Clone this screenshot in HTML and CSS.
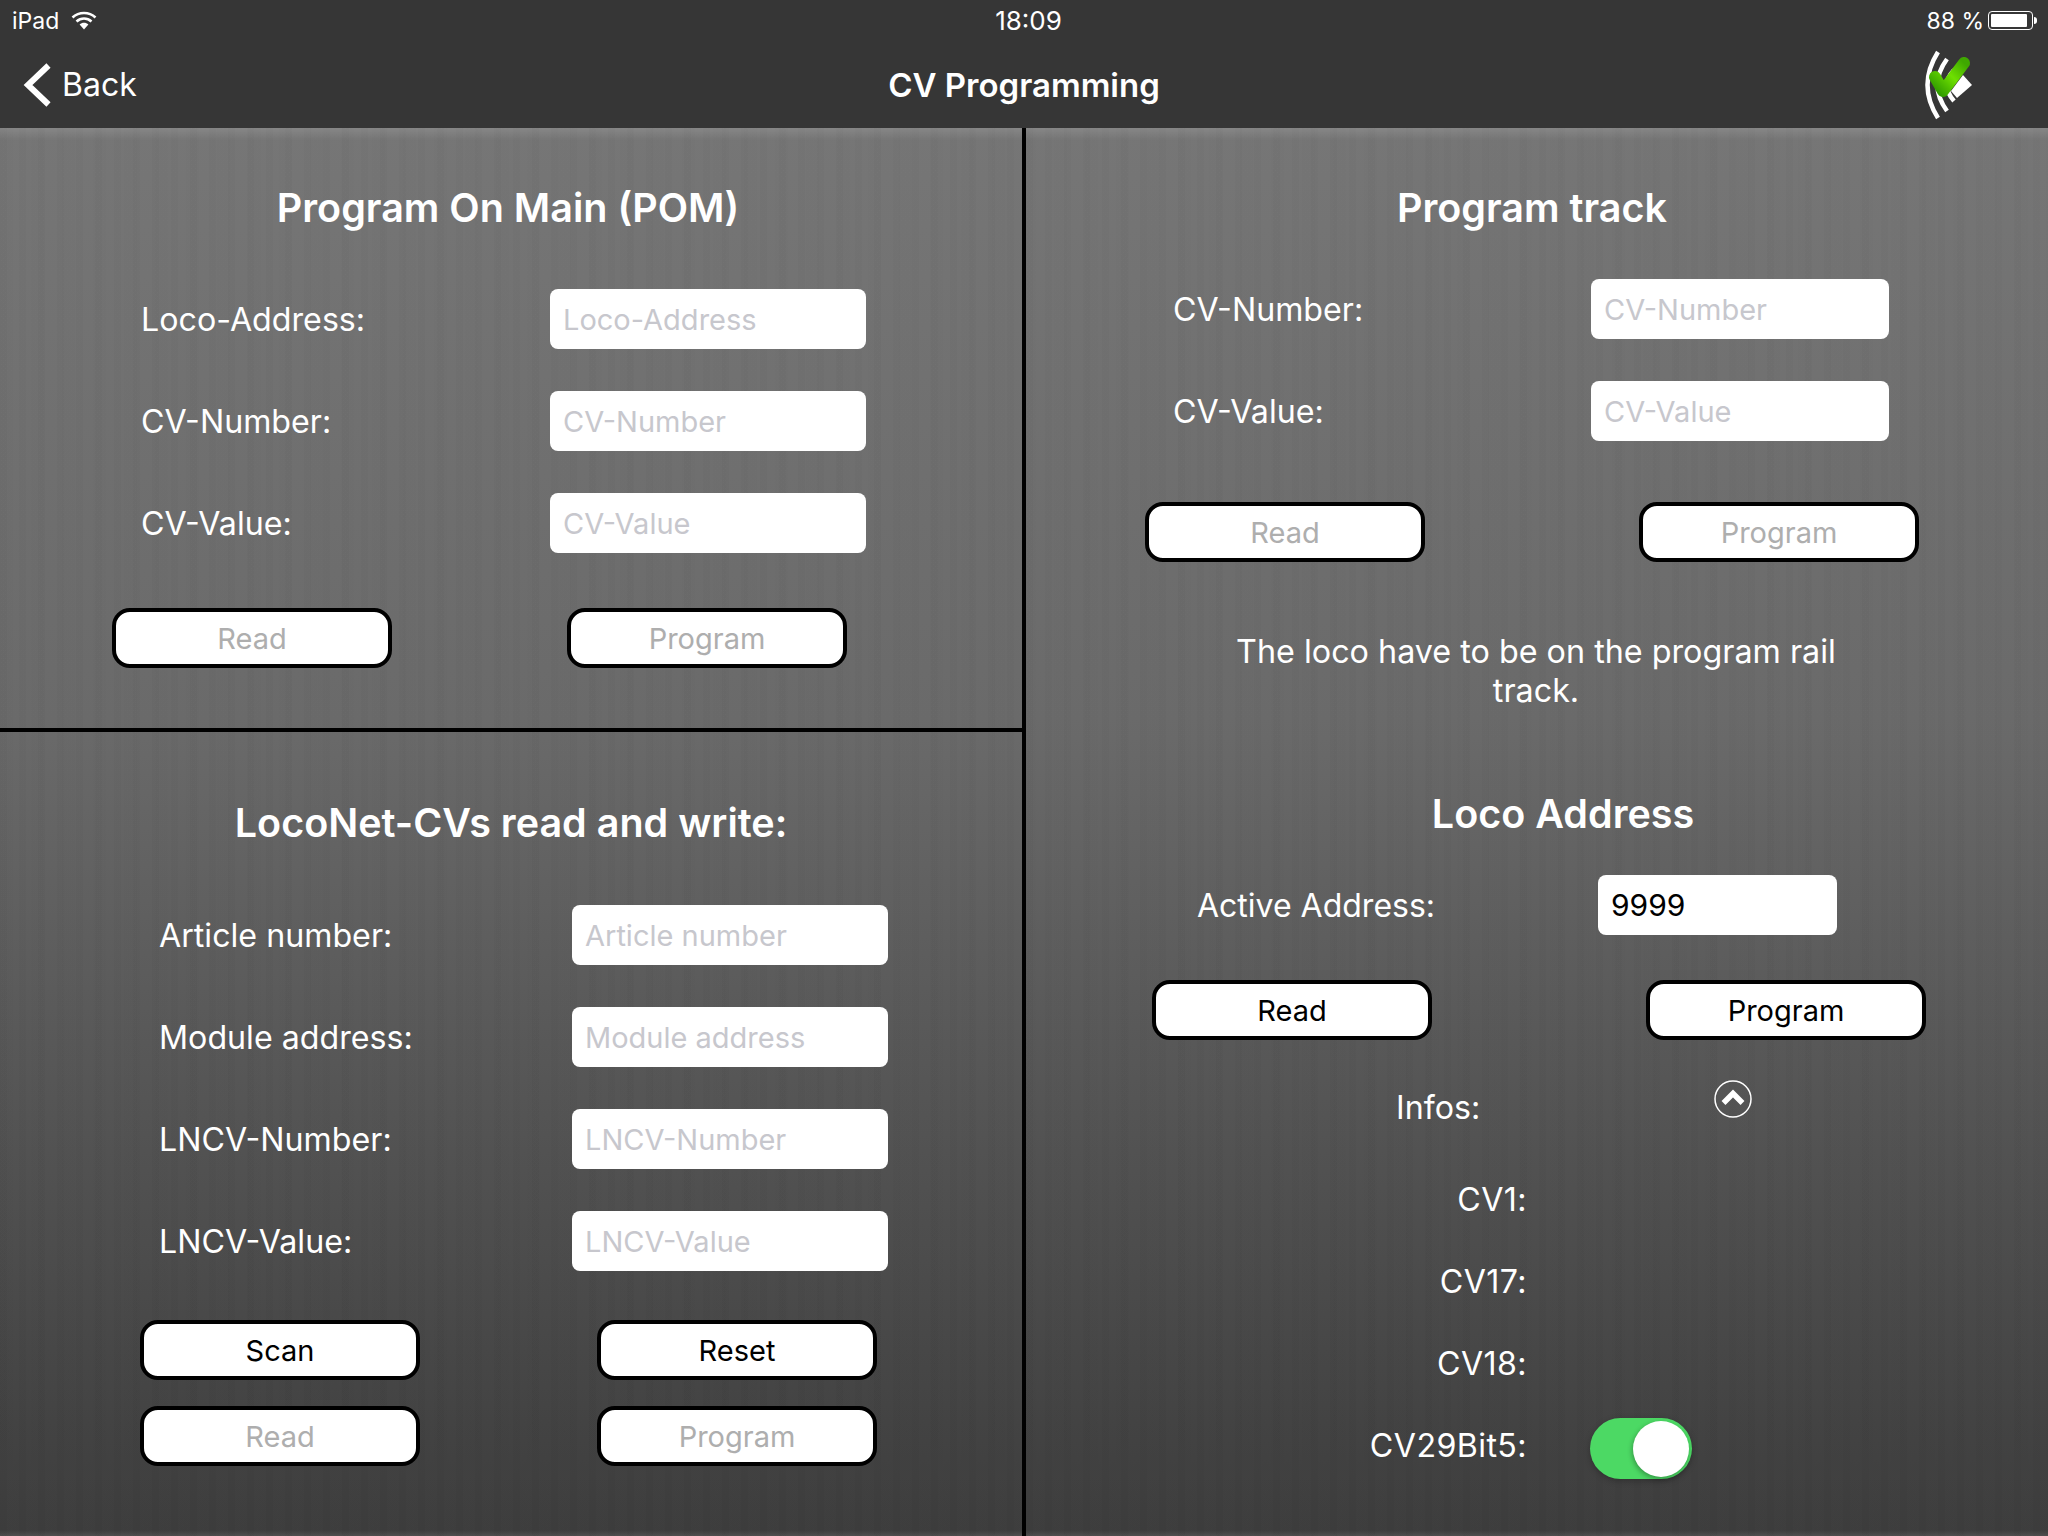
FILE: index.html
```html
<!DOCTYPE html>
<html lang="en">

<head>
    <meta charset="UTF-8">
    <meta name="viewport" content="width=device-width, initial-scale=1.0">
    <title>CV Programming</title>
    <link rel="stylesheet" href="styles.css">
</head>

<body>
    <header class="topbar">
        <div class="status">
            <div class="status-left">
                <span>iPad</span>
                <svg class="wifi" viewBox="0 0 26 19" width="26" height="19">
                    <path d="M1.5 6.5C8 .5 18 .5 24.5 6.5M5.5 10.5C10 6.5 16 6.5 20.5 10.5" fill="none" stroke="#fff" stroke-width="2.6"/>
                    <path d="M8.6 13.4C11.2 11.2 14.8 11.2 17.4 13.4L13 18.6Z" fill="#fff"/>
                </svg>
            </div>
            <div class="status-time">18:09</div>
            <div class="status-right">
                <span>88 %</span>
                <div class="battery"><div class="battery-level"></div></div>
                <div class="battery-nub"></div>
            </div>
        </div>
        <nav class="navbar">
            <a class="back">
                <svg viewBox="0 0 28 44" width="28" height="44">
                    <path d="M25.5 2.5L5 22L25.5 41.5" fill="none" stroke="#fff" stroke-width="6"/>
                </svg>
                <span>Back</span>
            </a>
            <div class="nav-title">CV Programming</div>
            <div class="nav-right">
                <svg viewBox="0 0 56 72" width="56" height="72">
                    <defs>
                        <linearGradient id="checkGreen" x1="0" y1="1" x2="1" y2="0">
                            <stop offset="0" stop-color="#2f9a00"/>
                            <stop offset="0.55" stop-color="#6ee000"/>
                            <stop offset="1" stop-color="#3fa800"/>
                        </linearGradient>
                    </defs>
                    <path d="M18 3Q-3 36 18 69M27 10Q8 36 27 62M34 21Q20 36 34 52" fill="none" stroke="#fff" stroke-width="4.5"/>
                    <polygon points="43,26 52,36 37,49 31,42" fill="#fff"/>
                    <path d="M15 28L23 42L44 14" fill="none" stroke="url(#checkGreen)" stroke-width="12" stroke-linejoin="round" stroke-linecap="round"/>
                </svg>
            </div>
        </nav>
    </header>

    <main class="content">
        <div class="col-left">
            <section class="pom">
                <h2 class="title">Program On Main (POM)</h2>
                <div class="fields">
                    <div class="field"><label>Loco-Address:</label><input type="text" placeholder="Loco-Address"></div>
                    <div class="field"><label>CV-Number:</label><input type="text" placeholder="CV-Number"></div>
                    <div class="field"><label>CV-Value:</label><input type="text" placeholder="CV-Value"></div>
                </div>
                <div class="buttons">
                    <button class="off">Read</button>
                    <button class="off">Program</button>
                </div>
            </section>

            <section class="lncv">
                <h2 class="title">LocoNet-CVs read and write:</h2>
                <div class="fields">
                    <div class="field"><label>Article number:</label><input type="text" placeholder="Article number"></div>
                    <div class="field"><label>Module address:</label><input type="text" placeholder="Module address"></div>
                    <div class="field"><label>LNCV-Number:</label><input type="text" placeholder="LNCV-Number"></div>
                    <div class="field"><label>LNCV-Value:</label><input type="text" placeholder="LNCV-Value"></div>
                </div>
                <div class="buttons">
                    <button>Scan</button>
                    <button>Reset</button>
                </div>
                <div class="buttons second">
                    <button class="off">Read</button>
                    <button class="off">Program</button>
                </div>
            </section>
        </div>

        <div class="col-right">
            <section class="track">
                <h2 class="title">Program track</h2>
                <div class="fields">
                    <div class="field"><label>CV-Number:</label><input type="text" placeholder="CV-Number"></div>
                    <div class="field"><label>CV-Value:</label><input type="text" placeholder="CV-Value"></div>
                </div>
                <div class="buttons">
                    <button class="off">Read</button>
                    <button class="off">Program</button>
                </div>
                <p class="note">The loco have to be on the program rail track.</p>
            </section>

            <section class="address">
                <h2 class="title">Loco Address</h2>
                <div class="fields">
                    <div class="field"><label>Active Address:</label><input type="text" value="9999"></div>
                </div>
                <div class="buttons">
                    <button>Read</button>
                    <button>Program</button>
                </div>
                <div class="infos">
                    <span>Infos:</span>
                    <svg viewBox="0 0 38 38" width="38" height="38">
                        <circle cx="19" cy="19" r="18" fill="none" stroke="#fff" stroke-width="1.5"/>
                        <path d="M9.5 23L19 13.5L28.5 23" fill="none" stroke="#fff" stroke-width="5.5"/>
                    </svg>
                </div>
                <div class="cv-row"><span class="cv-name">CV1:</span></div>
                <div class="cv-row"><span class="cv-name">CV17:</span></div>
                <div class="cv-row"><span class="cv-name">CV18:</span></div>
                <div class="cv-row">
                    <span class="cv-name">CV29Bit5:</span>
                    <div class="switch"><div class="knob"></div></div>
                </div>
            </section>
        </div>
    </main>
</body>

</html>
```

FILE: styles.css
```css
* {
    box-sizing: border-box;
}

html,
body {
    margin: 0;
    padding: 0;
}

body {
    width: 2048px;
    height: 1536px;
    overflow: hidden;
    font-family: Inter, "Liberation Sans", sans-serif;
    color: #fff;
    background-color: #363636;
}

.topbar {
    height: 128px;
    background-color: #363636;
}

.status {
    display: grid;
    grid-template-columns: 1fr auto 1fr;
    align-items: center;
    height: 41px;
    padding: 0 11px 0 12px;
    font-size: 23px;
}

.status-left,
.status-right {
    display: flex;
    align-items: center;
}

.status-right {
    justify-content: flex-end;
}

.status-time {
    margin-left: 8px;
    font-size: 26px;
}

.wifi {
    margin-left: 12px;
}

.battery {
    width: 45px;
    height: 19px;
    margin-left: 4px;
    padding: 2px;
    border: 1px solid #fff;
    border-radius: 4px;
}

.battery-level {
    width: 36px;
    height: 13px;
    background-color: #fff;
    border-radius: 1px;
}

.battery-nub {
    width: 3px;
    height: 7px;
    margin-left: 1px;
    background-color: #fff;
    border-radius: 0 3px 3px 0;
}

.navbar {
    display: grid;
    grid-template-columns: 1fr auto 1fr;
    align-items: center;
    height: 87px;
}

.back {
    display: flex;
    align-items: center;
    padding-left: 23px;
    font-size: 32px;
}

.back span {
    margin-left: 11px;
}

.nav-title {
    font-size: 33px;
    font-weight: 600;
}

.nav-right {
    display: flex;
    justify-content: flex-end;
    padding-right: 72px;
}

.content {
    display: flex;
    height: 1408px;
    background-color: #5a5a5a;
    background-image:
        linear-gradient(to bottom, rgba(255, 255, 255, 0.12), rgba(255, 255, 255, 0) 12px),
        repeating-linear-gradient(to right, rgba(0, 0, 0, 0.008) 0, rgba(0, 0, 0, 0.008) 7px, rgba(255, 255, 255, 0.006) 7px, rgba(255, 255, 255, 0.006) 19px),
        repeating-linear-gradient(to right, rgba(0, 0, 0, 0.006) 0, rgba(0, 0, 0, 0.006) 13px, rgba(255, 255, 255, 0) 13px, rgba(255, 255, 255, 0) 31px),
        linear-gradient(to bottom, #757575 0, #696969 42%, #3c3c3c 99.6%, #4e4e4e 100%);
}

.col-left {
    width: 1026px;
    border-right: 4px solid #000;
}

.col-right {
    width: 1022px;
}

.title {
    margin: 0;
    font-size: 39.5px;
    font-weight: 600;
    line-height: 60px;
    text-align: center;
}

.field {
    display: flex;
    align-items: center;
    height: 60px;
    margin-bottom: 42px;
    font-size: 32.2px;
}

.field:last-child {
    margin-bottom: 0;
}

.field label {
    flex-shrink: 0;
}

input {
    height: 60px;
    padding: 0 13px;
    border: none;
    border-radius: 8px;
    background-color: #fff;
    color: #000;
    font-family: inherit;
    font-size: 30px;
}

input::placeholder {
    color: #c7c7cd;
    opacity: 1;
    font-size: 29px;
}

.buttons {
    display: flex;
    justify-content: space-between;
}

button {
    width: 280px;
    height: 60px;
    padding: 0;
    border: 4px solid #000;
    border-radius: 18px;
    background-color: #fff;
    color: #000;
    font-family: inherit;
    font-size: 29px;
}

button.off {
    color: #aeaeae;
}

/* top left */
.pom {
    height: 604px;
    padding-top: 50px;
    border-bottom: 4px solid #000;
}

.pom .title {
    padding-right: 6px;
}

.pom .fields {
    margin-top: 51px;
    padding-left: 141px;
}

.pom label {
    width: 409px;
}

.pom input {
    width: 316px;
}

.pom .buttons {
    width: 735px;
    margin: 55px 0 0 112px;
}

/* bottom left */
.lncv {
    padding-top: 61px;
}

.lncv .fields {
    margin-top: 52px;
    padding-left: 159px;
}

.lncv label {
    width: 413px;
}

.lncv input {
    width: 316px;
}

.lncv .buttons {
    width: 737px;
    margin: 49px 0 0 140px;
}

.lncv .buttons.second {
    margin-top: 26px;
}

/* top right */
.track {
    padding-top: 50px;
}

.track .title {
    padding-right: 10px;
}

.track .fields {
    margin-top: 41px;
    padding-left: 147px;
}

.track label {
    width: 418px;
}

.track input {
    width: 298px;
}

.track .buttons {
    width: 774px;
    margin: 61px 0 0 119px;
}

.note {
    width: 620px;
    margin: 70px 0 0 200px;
    font-size: 32.3px;
    line-height: 39px;
    text-align: center;
}

/* bottom right */
.address {
    margin-top: 74px;
}

.address .title {
    padding-left: 52px;
}

.address .fields {
    margin-top: 31px;
    padding-left: 171px;
}

.address label {
    width: 401px;
    font-size: 32px;
}

.address input {
    width: 239px;
}

.address .buttons {
    width: 774px;
    margin: 45px 0 0 126px;
}

.infos {
    display: flex;
    align-items: flex-start;
    margin-top: 40px;
    padding-left: 370px;
    font-size: 32.2px;
    line-height: 56px;
}

.infos svg {
    margin-left: 234px;
}

.cv-row {
    display: flex;
    align-items: center;
    height: 82px;
    font-size: 32.2px;
}

.infos + .cv-row {
    margin-top: 22px;
}

.cv-name {
    width: 501px;
    letter-spacing: 0.4px;
    text-align: right;
}

.switch {
    width: 102px;
    height: 61px;
    margin: 6px 0 0 63px;
    padding: 3px;
    border-radius: 31px;
    background-color: #4cd964;
    box-shadow: 0 2px 6px rgba(0, 0, 0, 0.25);
}

.knob {
    width: 56px;
    height: 56px;
    margin-left: 40px;
    border-radius: 50%;
    background-color: #fff;
    box-shadow: -1px 2px 5px rgba(0, 0, 0, 0.3);
}
```
